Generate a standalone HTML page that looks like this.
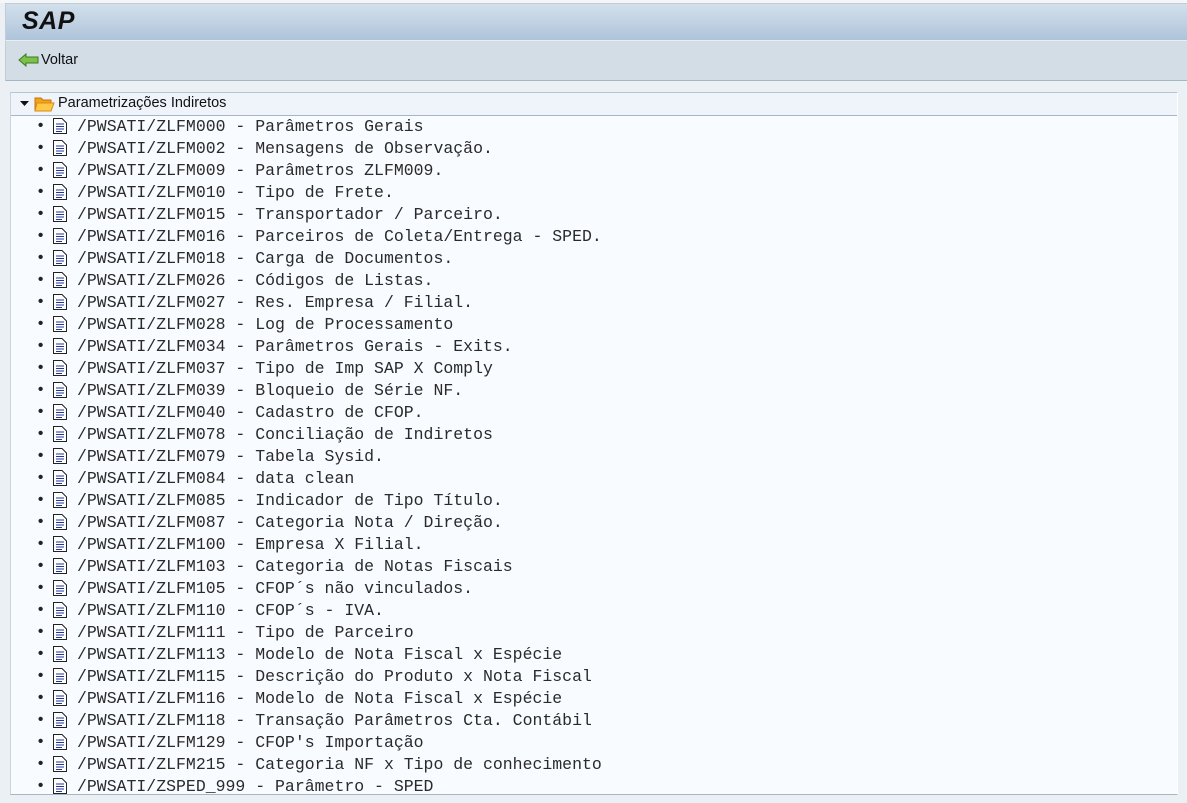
<!DOCTYPE html>
<html><head><meta charset="utf-8"><style>
body{margin:0;width:1187px;height:803px;overflow:hidden;background:#ebf0f5;font-family:"Liberation Sans",sans-serif;position:relative}
.top{position:absolute;left:0;top:0;width:1187px;height:3px;background:#f4f6f8}
.title{position:absolute;left:5px;top:3px;width:1182px;height:37px;background:linear-gradient(#d3e0ec,#aec4da);border-top:1px solid #c0ccd8;border-left:1px solid #c0ccd8;box-sizing:border-box}
.title span{position:absolute;left:16px;top:3px;font:italic bold 25px "Liberation Sans",sans-serif;color:#111;letter-spacing:0.5px}
.tool{position:absolute;left:5px;top:40px;width:1182px;height:41px;background:#d2dde6;border-top:1px solid #e8eef4;border-bottom:1px solid #a6b6c4;border-left:1px solid #c0ccd8;box-sizing:border-box}
.tool span{position:absolute;left:35px;top:11px;font-size:14.5px;color:#111}
.panel{position:absolute;left:10px;top:92px;width:1168px;height:703px;background:#f8fbff;border-top:1px solid #b8c6d4;border-bottom:1px solid #a6b6c4;border-left:1px solid #c8d4de;border-right:1px solid #fff;box-sizing:border-box}
.hdr{height:22px;background:#eef4fa;border-bottom:1px solid #a6b6c4;position:relative}
.hdr span{position:absolute;left:47px;top:2px;font-size:14.5px;color:#111}
.row{height:22px;position:relative;font:16.5px/22px "Liberation Mono",monospace;color:#2a2a2a;white-space:pre}
.row .b{position:absolute;left:27px;top:0;font-family:"Liberation Sans";font-size:15px;font-weight:bold;color:#222}
.row svg{position:absolute;left:41px;top:2px}
.row .t{position:absolute;left:66px;top:1px}
#list{position:absolute;left:11px;top:115px;width:1166px}
</style></head><body>
<div class="top"></div>
<div class="title"><span>SAP</span></div>
<div class="tool"><svg style="position:absolute;left:12px;top:12px" width="22" height="14"><path d="M1 7 L8 1 L8 4 L20 4 L20 10 L8 10 L8 13 Z" fill="#7cc24a" stroke="#3d7a1e" stroke-width="1"/></svg><span>Voltar</span></div>
<div class="panel">
<div class="hdr"><svg style="position:absolute;left:9px;top:8px" width="9" height="6"><path d="M0 0H9L4.5 5Z" fill="#111"/></svg><svg style="position:absolute;left:23px;top:3px" width="21" height="16"><path d="M1 2H7L9 4H17V15H1Z" fill="#f3a21c" stroke="#c47208"/><path d="M3 7H20L17 15H1Z" fill="#ffc845" stroke="#d98a10"/></svg><span>Parametrizações Indiretos</span></div>
</div>
<div id="list">
<div class="row"><span class="b">•</span><svg width="16" height="18"><path d="M1.5 1.5H10L14.5 6V16.5H1.5Z" fill="#fff" stroke="#222"/><path d="M4 7H12M4 9.5H12M4 12H12M4 14.5H10" stroke="#223399"/></svg><span class="t">/PWSATI/ZLFM000 - Parâmetros Gerais</span></div>
<div class="row"><span class="b">•</span><svg width="16" height="18"><path d="M1.5 1.5H10L14.5 6V16.5H1.5Z" fill="#fff" stroke="#222"/><path d="M4 7H12M4 9.5H12M4 12H12M4 14.5H10" stroke="#223399"/></svg><span class="t">/PWSATI/ZLFM002 - Mensagens de Observação.</span></div>
<div class="row"><span class="b">•</span><svg width="16" height="18"><path d="M1.5 1.5H10L14.5 6V16.5H1.5Z" fill="#fff" stroke="#222"/><path d="M4 7H12M4 9.5H12M4 12H12M4 14.5H10" stroke="#223399"/></svg><span class="t">/PWSATI/ZLFM009 - Parâmetros ZLFM009.</span></div>
<div class="row"><span class="b">•</span><svg width="16" height="18"><path d="M1.5 1.5H10L14.5 6V16.5H1.5Z" fill="#fff" stroke="#222"/><path d="M4 7H12M4 9.5H12M4 12H12M4 14.5H10" stroke="#223399"/></svg><span class="t">/PWSATI/ZLFM010 - Tipo de Frete.</span></div>
<div class="row"><span class="b">•</span><svg width="16" height="18"><path d="M1.5 1.5H10L14.5 6V16.5H1.5Z" fill="#fff" stroke="#222"/><path d="M4 7H12M4 9.5H12M4 12H12M4 14.5H10" stroke="#223399"/></svg><span class="t">/PWSATI/ZLFM015 - Transportador / Parceiro.</span></div>
<div class="row"><span class="b">•</span><svg width="16" height="18"><path d="M1.5 1.5H10L14.5 6V16.5H1.5Z" fill="#fff" stroke="#222"/><path d="M4 7H12M4 9.5H12M4 12H12M4 14.5H10" stroke="#223399"/></svg><span class="t">/PWSATI/ZLFM016 - Parceiros de Coleta/Entrega - SPED.</span></div>
<div class="row"><span class="b">•</span><svg width="16" height="18"><path d="M1.5 1.5H10L14.5 6V16.5H1.5Z" fill="#fff" stroke="#222"/><path d="M4 7H12M4 9.5H12M4 12H12M4 14.5H10" stroke="#223399"/></svg><span class="t">/PWSATI/ZLFM018 - Carga de Documentos.</span></div>
<div class="row"><span class="b">•</span><svg width="16" height="18"><path d="M1.5 1.5H10L14.5 6V16.5H1.5Z" fill="#fff" stroke="#222"/><path d="M4 7H12M4 9.5H12M4 12H12M4 14.5H10" stroke="#223399"/></svg><span class="t">/PWSATI/ZLFM026 - Códigos de Listas.</span></div>
<div class="row"><span class="b">•</span><svg width="16" height="18"><path d="M1.5 1.5H10L14.5 6V16.5H1.5Z" fill="#fff" stroke="#222"/><path d="M4 7H12M4 9.5H12M4 12H12M4 14.5H10" stroke="#223399"/></svg><span class="t">/PWSATI/ZLFM027 - Res. Empresa / Filial.</span></div>
<div class="row"><span class="b">•</span><svg width="16" height="18"><path d="M1.5 1.5H10L14.5 6V16.5H1.5Z" fill="#fff" stroke="#222"/><path d="M4 7H12M4 9.5H12M4 12H12M4 14.5H10" stroke="#223399"/></svg><span class="t">/PWSATI/ZLFM028 - Log de Processamento</span></div>
<div class="row"><span class="b">•</span><svg width="16" height="18"><path d="M1.5 1.5H10L14.5 6V16.5H1.5Z" fill="#fff" stroke="#222"/><path d="M4 7H12M4 9.5H12M4 12H12M4 14.5H10" stroke="#223399"/></svg><span class="t">/PWSATI/ZLFM034 - Parâmetros Gerais - Exits.</span></div>
<div class="row"><span class="b">•</span><svg width="16" height="18"><path d="M1.5 1.5H10L14.5 6V16.5H1.5Z" fill="#fff" stroke="#222"/><path d="M4 7H12M4 9.5H12M4 12H12M4 14.5H10" stroke="#223399"/></svg><span class="t">/PWSATI/ZLFM037 - Tipo de Imp SAP X Comply</span></div>
<div class="row"><span class="b">•</span><svg width="16" height="18"><path d="M1.5 1.5H10L14.5 6V16.5H1.5Z" fill="#fff" stroke="#222"/><path d="M4 7H12M4 9.5H12M4 12H12M4 14.5H10" stroke="#223399"/></svg><span class="t">/PWSATI/ZLFM039 - Bloqueio de Série NF.</span></div>
<div class="row"><span class="b">•</span><svg width="16" height="18"><path d="M1.5 1.5H10L14.5 6V16.5H1.5Z" fill="#fff" stroke="#222"/><path d="M4 7H12M4 9.5H12M4 12H12M4 14.5H10" stroke="#223399"/></svg><span class="t">/PWSATI/ZLFM040 - Cadastro de CFOP.</span></div>
<div class="row"><span class="b">•</span><svg width="16" height="18"><path d="M1.5 1.5H10L14.5 6V16.5H1.5Z" fill="#fff" stroke="#222"/><path d="M4 7H12M4 9.5H12M4 12H12M4 14.5H10" stroke="#223399"/></svg><span class="t">/PWSATI/ZLFM078 - Conciliação de Indiretos</span></div>
<div class="row"><span class="b">•</span><svg width="16" height="18"><path d="M1.5 1.5H10L14.5 6V16.5H1.5Z" fill="#fff" stroke="#222"/><path d="M4 7H12M4 9.5H12M4 12H12M4 14.5H10" stroke="#223399"/></svg><span class="t">/PWSATI/ZLFM079 - Tabela Sysid.</span></div>
<div class="row"><span class="b">•</span><svg width="16" height="18"><path d="M1.5 1.5H10L14.5 6V16.5H1.5Z" fill="#fff" stroke="#222"/><path d="M4 7H12M4 9.5H12M4 12H12M4 14.5H10" stroke="#223399"/></svg><span class="t">/PWSATI/ZLFM084 - data clean</span></div>
<div class="row"><span class="b">•</span><svg width="16" height="18"><path d="M1.5 1.5H10L14.5 6V16.5H1.5Z" fill="#fff" stroke="#222"/><path d="M4 7H12M4 9.5H12M4 12H12M4 14.5H10" stroke="#223399"/></svg><span class="t">/PWSATI/ZLFM085 - Indicador de Tipo Título.</span></div>
<div class="row"><span class="b">•</span><svg width="16" height="18"><path d="M1.5 1.5H10L14.5 6V16.5H1.5Z" fill="#fff" stroke="#222"/><path d="M4 7H12M4 9.5H12M4 12H12M4 14.5H10" stroke="#223399"/></svg><span class="t">/PWSATI/ZLFM087 - Categoria Nota / Direção.</span></div>
<div class="row"><span class="b">•</span><svg width="16" height="18"><path d="M1.5 1.5H10L14.5 6V16.5H1.5Z" fill="#fff" stroke="#222"/><path d="M4 7H12M4 9.5H12M4 12H12M4 14.5H10" stroke="#223399"/></svg><span class="t">/PWSATI/ZLFM100 - Empresa X Filial.</span></div>
<div class="row"><span class="b">•</span><svg width="16" height="18"><path d="M1.5 1.5H10L14.5 6V16.5H1.5Z" fill="#fff" stroke="#222"/><path d="M4 7H12M4 9.5H12M4 12H12M4 14.5H10" stroke="#223399"/></svg><span class="t">/PWSATI/ZLFM103 - Categoria de Notas Fiscais</span></div>
<div class="row"><span class="b">•</span><svg width="16" height="18"><path d="M1.5 1.5H10L14.5 6V16.5H1.5Z" fill="#fff" stroke="#222"/><path d="M4 7H12M4 9.5H12M4 12H12M4 14.5H10" stroke="#223399"/></svg><span class="t">/PWSATI/ZLFM105 - CFOP´s não vinculados.</span></div>
<div class="row"><span class="b">•</span><svg width="16" height="18"><path d="M1.5 1.5H10L14.5 6V16.5H1.5Z" fill="#fff" stroke="#222"/><path d="M4 7H12M4 9.5H12M4 12H12M4 14.5H10" stroke="#223399"/></svg><span class="t">/PWSATI/ZLFM110 - CFOP´s - IVA.</span></div>
<div class="row"><span class="b">•</span><svg width="16" height="18"><path d="M1.5 1.5H10L14.5 6V16.5H1.5Z" fill="#fff" stroke="#222"/><path d="M4 7H12M4 9.5H12M4 12H12M4 14.5H10" stroke="#223399"/></svg><span class="t">/PWSATI/ZLFM111 - Tipo de Parceiro</span></div>
<div class="row"><span class="b">•</span><svg width="16" height="18"><path d="M1.5 1.5H10L14.5 6V16.5H1.5Z" fill="#fff" stroke="#222"/><path d="M4 7H12M4 9.5H12M4 12H12M4 14.5H10" stroke="#223399"/></svg><span class="t">/PWSATI/ZLFM113 - Modelo de Nota Fiscal x Espécie</span></div>
<div class="row"><span class="b">•</span><svg width="16" height="18"><path d="M1.5 1.5H10L14.5 6V16.5H1.5Z" fill="#fff" stroke="#222"/><path d="M4 7H12M4 9.5H12M4 12H12M4 14.5H10" stroke="#223399"/></svg><span class="t">/PWSATI/ZLFM115 - Descrição do Produto x Nota Fiscal</span></div>
<div class="row"><span class="b">•</span><svg width="16" height="18"><path d="M1.5 1.5H10L14.5 6V16.5H1.5Z" fill="#fff" stroke="#222"/><path d="M4 7H12M4 9.5H12M4 12H12M4 14.5H10" stroke="#223399"/></svg><span class="t">/PWSATI/ZLFM116 - Modelo de Nota Fiscal x Espécie</span></div>
<div class="row"><span class="b">•</span><svg width="16" height="18"><path d="M1.5 1.5H10L14.5 6V16.5H1.5Z" fill="#fff" stroke="#222"/><path d="M4 7H12M4 9.5H12M4 12H12M4 14.5H10" stroke="#223399"/></svg><span class="t">/PWSATI/ZLFM118 - Transação Parâmetros Cta. Contábil</span></div>
<div class="row"><span class="b">•</span><svg width="16" height="18"><path d="M1.5 1.5H10L14.5 6V16.5H1.5Z" fill="#fff" stroke="#222"/><path d="M4 7H12M4 9.5H12M4 12H12M4 14.5H10" stroke="#223399"/></svg><span class="t">/PWSATI/ZLFM129 - CFOP's Importação</span></div>
<div class="row"><span class="b">•</span><svg width="16" height="18"><path d="M1.5 1.5H10L14.5 6V16.5H1.5Z" fill="#fff" stroke="#222"/><path d="M4 7H12M4 9.5H12M4 12H12M4 14.5H10" stroke="#223399"/></svg><span class="t">/PWSATI/ZLFM215 - Categoria NF x Tipo de conhecimento</span></div>
<div class="row"><span class="b">•</span><svg width="16" height="18"><path d="M1.5 1.5H10L14.5 6V16.5H1.5Z" fill="#fff" stroke="#222"/><path d="M4 7H12M4 9.5H12M4 12H12M4 14.5H10" stroke="#223399"/></svg><span class="t">/PWSATI/ZSPED_999 - Parâmetro - SPED</span></div>
</div>
</body></html>
